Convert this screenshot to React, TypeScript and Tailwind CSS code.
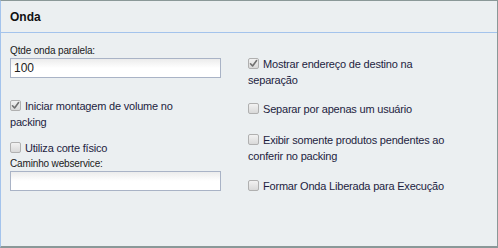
import React from 'react';

const font = { fontFamily: '"Liberation Sans", Arial, sans-serif' };

function Check({ checked }: { checked?: boolean }) {
  return (
    <span className="mt-[2px] flex h-[11px] w-[11px] shrink-0 items-center justify-center rounded-[2px] border border-[#b0b0b0] bg-gradient-to-b from-[#f2f2f2] to-[#d9d9d9]">
      {checked && (
        <svg width="9" height="9" viewBox="0 0 9 9" fill="none">
          <path d="M1.5 4.8 L3.6 7 L7.6 1.6" stroke="#707070" strokeWidth="1.6" strokeLinecap="round" strokeLinejoin="round" />
        </svg>
      )}
    </span>
  );
}

function Option({ label, checked, className = '' }: { label: React.ReactNode; checked?: boolean; className?: string }) {
  return (
    <label className={`block text-[11px] leading-[16px] tracking-[-0.2px] text-[#1d1d3f] ${className}`}>
      <span className="inline-flex align-top">
        <Check checked={checked} />
      </span>
      <span className="ml-[4px]">{label}</span>
    </label>
  );
}

function Field({ label, value, className = '' }: { label: string; value?: string; className?: string }) {
  return (
    <div className={className}>
      <p className="text-[10px] leading-[13px] tracking-[-0.15px] text-[#1a1a1a]">{label}</p>
      <div className="mt-[1px] h-[20px] w-[211px] border border-[#a9b3c6] bg-gradient-to-b from-[#ececec] via-white to-white px-[3px] text-[12px] leading-[18px] text-[#222]">
        {value}
      </div>
    </div>
  );
}

export default function App() {
  return (
    <div style={font} className="h-[248px] w-[498px] border-t border-r border-b-2 border-[#8a9898] border-l border-l-[#a3c3ec] bg-[#ebeff1]">
      <header className="flex h-[32px] items-center border-b border-[#a3c3ec] pl-[9px]">
        <span className="text-[12px] font-bold text-[#111]">Onda</span>
      </header>

      <div className="flex pl-[9px]">
        <div className="w-[238px]">
          <Field label="Qtde onda paralela:" value="100" className="mt-[11px]" />
          <Option checked className="mt-[20px] w-[200px]" label="Iniciar montagem de volume no packing" />
          <Option className="mt-[10px]" label="Utiliza corte físico" />
          <Field label="Caminho webservice:" className="mt-[1px]" />
        </div>

        <div className="w-[240px]">
          <Option checked className="mt-[23px] w-[175px]" label="Mostrar endereço de destino na separação" />
          <Option className="mt-[13px]" label="Separar por apenas um usuário" />
          <Option className="mt-[15px] w-[205px]" label="Exibir somente produtos pendentes ao conferir no packing" />
          <Option className="mt-[14px]" label="Formar Onda Liberada para Execução" />
        </div>
      </div>
    </div>
  );
}
